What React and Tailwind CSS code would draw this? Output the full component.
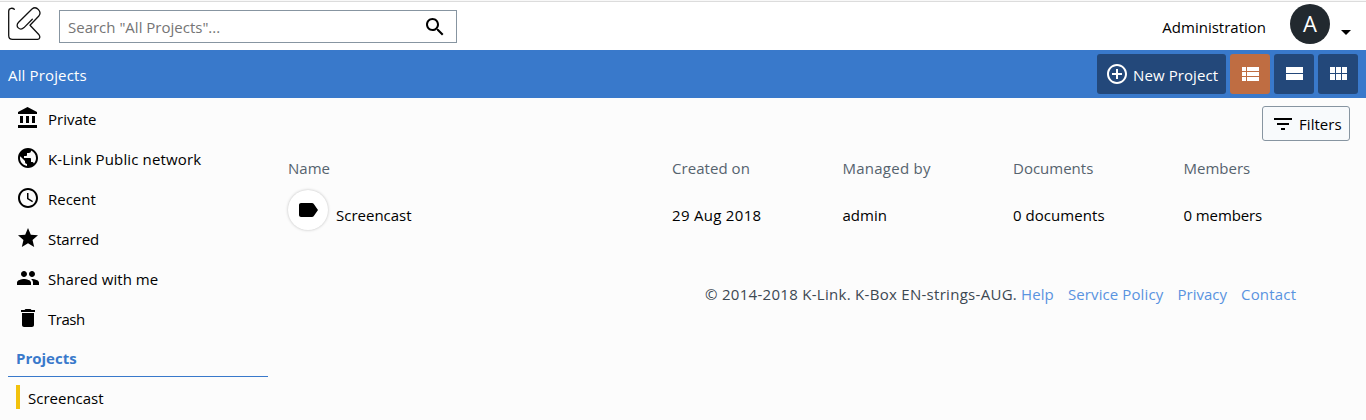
const PATHS = {
  bank: 'M4 10v7h3v-7H4zm6 0v7h3v-7h-3zM2 22h19v-3H2v3zm14-12v7h3v-7h-3zm-4.500-9L2 6v2h19V6l-9.500-5z',
  globe: 'M12 2C6.480 2 2 6.480 2 12s4.480 10 10 10 10-4.480 10-10S17.520 2 12 2zm-1 17.930c-3.950-.490-7-3.850-7-7.930 0-.620.080-1.210.210-1.790L9 15v1c0 1.100.900 2 2 2v1.930zm6.900-2.540c-.260-.810-1-1.390-1.900-1.390h-1v-3c0-.550-.450-1-1-1H8v-2h2c.550 0 1-.450 1-1V7h2c1.100 0 2-.900 2-2v-.410c2.930 1.190 5 4.060 5 7.410 0 2.080-.800 3.970-2.100 5.390z',
  clock: 'M11.990 2C6.470 2 2 6.480 2 12s4.470 10 9.990 10C17.520 22 22 17.520 22 12S17.520 2 11.990 2zM12 20c-4.420 0-8-3.580-8-8s3.580-8 8-8 8 3.580 8 8-3.580 8-8 8zm.500-13H11v6l5.250 3.150.750-1.230-4.500-2.670z',
  star: 'M12 17.270L18.180 21l-1.640-7.030L22 9.240l-7.190-.610L12 2 9.190 8.630 2 9.240l5.460 4.730L5.820 21z',
  people: 'M16 11c1.660 0 2.990-1.340 2.990-3S17.660 5 16 5c-1.660 0-3 1.340-3 3s1.340 3 3 3zm-8 0c1.660 0 2.990-1.340 2.990-3S9.660 5 8 5C6.340 5 5 6.340 5 8s1.340 3 3 3zm0 2c-2.330 0-7 1.170-7 3.500V19h14v-2.500c0-2.330-4.670-3.500-7-3.500zm8 0c-.290 0-.620.020-.970.050 1.160.840 1.970 1.970 1.970 3.450V19h6v-2.500c0-2.330-4.670-3.500-7-3.500z',
  trash: 'M6 19c0 1.100.900 2 2 2h8c1.100 0 2-.900 2-2V7H6v12zM19 4h-3.500l-1-1h-5l-1 1H5v2h14V4z',
  label: 'M17.630 5.840C17.270 5.330 16.670 5 16 5L5 5.010C3.900 5.010 3 5.900 3 7v10c0 1.100.900 1.990 2 1.990L16 19c.670 0 1.270-.330 1.630-.840L22 12l-4.370-6.160z',
  search: 'M15.500 14h-.790l-.280-.270C15.410 12.590 16 11.110 16 9.500 16 5.910 13.090 3 9.500 3S3 5.910 3 9.500 5.910 16 9.500 16c1.610 0 3.090-.590 4.230-1.570l.270.280v.790l5 4.990L20.490 19l-4.990-5zm-6 0C7.010 14 5 11.990 5 9.500S7.010 5 9.500 5 14 7.010 14 9.500 11.990 14 9.500 14z',
  add: 'M13 7h-2v4H7v2h4v4h2v-4h4v-2h-4V7zm-1-5C6.480 2 2 6.480 2 12s4.480 10 10 10 10-4.480 10-10S17.520 2 12 2zm0 18c-4.410 0-8-3.590-8-8s3.590-8 8-8 8 3.590 8 8-3.590 8-8 8z',
  list: 'M4 14h4v-4H4v4zm0 5h4v-4H4v4zM4 9h4V5H4v4zm5 5h12v-4H9v4zm0 5h12v-4H9v4zM9 5v4h12V5H9z',
  stream: 'M4 18h17v-6H4v6zM4 5v6h17V5H4z',
  grid: 'M4 11h5V5H4v6zm0 7h5v-6H4v6zm6 0h5v-6h-5v6zm6 0h5v-6h-5v6zm-6-7h5V5h-5v6zm6-6v6h5V5h-5z',
  filter: 'M10 18h4v-2h-4v2zM3 6v2h18V6H3zm3 7h12v-2H6v2z',
  caret: 'M7 10l5 5 5-5z',
};

function Icon({ name, className = '' }) {
  return (
    <svg viewBox="0 0 24 24" fill="currentColor" className={`size-6 shrink-0 ${className}`}>
      <path d={PATHS[name]} />
    </svg>
  );
}

function Logo() {
  return (
    <svg viewBox="0 0 34 34" className="h-[34px] w-[34px] shrink-0" fill="none" stroke="#111" strokeWidth="1.3" strokeLinecap="round" strokeLinejoin="round">
      <path d="M6.300 2.300C4.800.800.700.600.700 4.200V28.500Q.700 32.400 4.600 32.400H29.500C31.900 32.400 32.400 29.500 31 27.800L22 18.200 30.600 9.300C34.500 4.800 28.500-1.700 24 2L10.600 15.200C6.500 19.500 12 24.300 16 20.600L24.300 12.300" />
    </svg>
  );
}

const NAV = [
  ['bank', 'Private', 'tracking-normal'],
  ['globe', 'K-Link Public network', 'tracking-[0.14px]'],
  ['clock', 'Recent', 'tracking-normal'],
  ['star', 'Starred', 'tracking-[-0.1px]'],
  ['people', 'Shared with me', 'tracking-[0.05px]'],
  ['trash', 'Trash', 'tracking-[-0.5px]'],
];

const COLUMNS = [
  ['Created on', '29 Aug 2018', 'tracking-[0.05px]', 'tracking-[0.3px]'],
  ['Managed by', 'admin', 'tracking-[0.25px]', 'tracking-normal'],
  ['Documents', '0 documents', 'tracking-normal', 'tracking-[0.05px]'],
  ['Members', '0 members', 'tracking-normal', 'tracking-[-0.1px]'],
];

export default function App() {
  return (
    <div className="flex h-[420px] w-[1366px] flex-col overflow-hidden bg-[#fcfcfc] font-['Open_Sans',sans-serif] text-[15px] leading-6 text-black">
      <div className="h-0.5 shrink-0 border-b border-[#dcdcdc] bg-[#f8f8f8]" />
      <header className="flex h-12 shrink-0 items-start bg-white pl-2">
        <div className="pt-[5px]"><Logo /></div>
        <div className="mt-2 ml-[17px] flex h-[33px] w-[398px] items-center border border-[#8795a1] pr-[9px] pl-2">
          <span className="flex-1 text-[#757575]">Search "All Projects"...</span>
          <Icon name="search" />
        </div>
        <span className="mt-[13px] ml-auto">Administration</span>
        <div className="mt-[2px] ml-[24px] flex size-10 items-center justify-center rounded-full bg-[#22292f] pb-[3px] text-[22px] text-white">A</div>
        <Icon name="caret" className="mt-[18px] mr-2 ml-1" />
      </header>

      <div className="flex h-12 shrink-0 items-center gap-1 bg-[#3979cb] px-2 text-white">
        <span className="mr-auto pt-0.5 tracking-[0.15px]">All Projects</span>
        <button className="flex h-10 w-[129px] items-center gap-1 rounded-[3px] bg-[#23487a] pl-2">
          <Icon name="add" />
          <span className="pt-0.5 tracking-[0.1px] whitespace-nowrap">New Project</span>
        </button>
        <button className="flex size-10 items-center justify-center rounded-[3px] bg-[#bf6d42]"><Icon name="list" /></button>
        <button className="flex size-10 items-center justify-center rounded-[3px] bg-[#23487a]"><Icon name="stream" /></button>
        <button className="flex size-10 items-center justify-center rounded-[3px] bg-[#23487a]"><Icon name="grid" /></button>
      </div>

      <div className="flex flex-1">
        <aside className="w-[268px] shrink-0 pl-2">
          <nav>
            {NAV.map(([icon, label, tracking]) => (
              <a key={label} className="flex h-10 items-center gap-2 pl-2">
                <Icon name={icon} />
                <span className={`pt-px ${tracking}`}>{label}</span>
              </a>
            ))}
          </nav>
          <h2 className="h-[39px] border-b border-[#3979cb] pt-2 pl-2 font-bold text-[#3979cb]">Projects</h2>
          <a className="mt-2 ml-2 flex h-6 items-center border-l-4 border-[#f2c20d] pt-0.5 pl-2">Screencast</a>
        </aside>

        <main className="flex flex-1 flex-col pl-5">
          <button className="mt-2 mr-4 flex h-[35px] w-[88px] items-center gap-1 self-end rounded-[3px] border border-[#8795a1] bg-[#f8fafc] pl-2">
            <Icon name="filter" />
            <span className="tracking-[0.05px]">Filters</span>
          </button>
          <div className="mt-[15px] grid grid-cols-[384px_170.500px_170.500px_170.500px_170.500px]">
            <div>
              <div className="text-[#56636e]">Name</div>
              <div className="mt-[10px] flex">
                <div className="flex size-10 items-center justify-center rounded-full bg-white shadow-[0_0_3px_rgba(0,0,0,0.25)]"><Icon name="label" /></div>
                <span className="mt-[13px] ml-2">Screencast</span>
              </div>
            </div>
            {COLUMNS.map(([head, value, headTracking, valueTracking]) => (
              <div key={head}>
                <div className={`text-[#56636e] ${headTracking}`}>{head}</div>
                <div className={`mt-[23px] ${valueTracking}`}>{value}</div>
              </div>
            ))}
          </div>
          <footer className="mt-[52px] flex pl-[417px] text-[#3d4852]">
            <span className="w-[316px] tracking-[0.29px] whitespace-nowrap">© 2014-2018 K-Link. K-Box EN-strings-AUG.</span>
            <a className="w-[47px] tracking-[0.1px] text-[#5993e0]">Help</a>
            <a className="w-[109.500px] tracking-[0.1px] whitespace-nowrap text-[#5993e0]">Service Policy</a>
            <a className="w-[63.500px] text-[#5993e0]">Privacy</a>
            <a className="tracking-[0.2px] text-[#5993e0]">Contact</a>
          </footer>
        </main>
      </div>
    </div>
  );
}
